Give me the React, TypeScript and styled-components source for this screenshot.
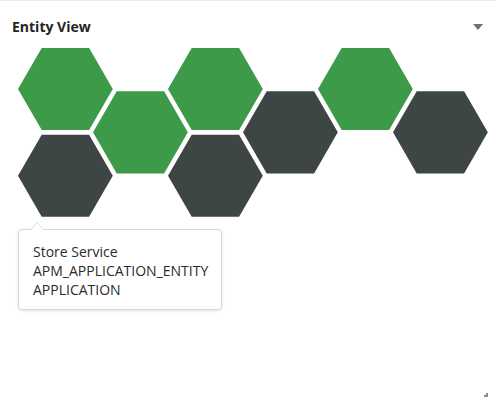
import React from "react";
import styled, { createGlobalStyle } from "styled-components";

const GlobalStyle = createGlobalStyle`
  html, body { margin: 0; padding: 0; background: #ffffff; }
  body { font-family: "Open Sans", "Liberation Sans", sans-serif; color: #222; }
  * { box-sizing: border-box; }
`;

const Panel = styled.div`
  position: relative;
  width: 496px;
  height: 402px;
  background: #ffffff;
  border-top: 1px solid #ececec;
  display: flex;
  flex-direction: column;
`;

const Header = styled.div`
  height: 39px;
  padding: 12px 12px 0 12px;
  display: flex;
  align-items: center;
  justify-content: space-between;
`;

const Title = styled.h2`
  margin: 0;
  font-size: 14px;
  font-weight: 700;
  color: #1f2424;
  line-height: 20px;
`;

const Caret = styled.span`
  width: 0;
  height: 0;
  border-left: 5px solid transparent;
  border-right: 5px solid transparent;
  border-top: 6px solid #707070;
  margin-right: 1px;
`;

const Chart = styled.svg`
  display: block;
  width: 496px;
  height: 190px;
`;

const Tooltip = styled.div`
  position: absolute;
  left: 18px;
  top: 228px;
  width: 204px;
  height: 81px;
  padding: 12px 14px 10px 14px;
  background: #ffffff;
  border: 1px solid #d8d8d8;
  border-radius: 4px;
  box-shadow: 0 1px 3px rgba(0, 0, 0, 0.12);
  font-size: 14px;
  line-height: 19px;
  color: #2b2b2b;

  &::before,
  &::after {
    content: "";
    position: absolute;
    left: 11px;
    width: 0;
    height: 0;
    border-left: 7px solid transparent;
    border-right: 7px solid transparent;
  }
  &::before {
    top: -8px;
    border-bottom: 8px solid #d8d8d8;
  }
  &::after {
    top: -7px;
    left: 12px;
    border-left-width: 6px;
    border-right-width: 6px;
    border-bottom: 7px solid #ffffff;
  }
`;

const Line = styled.div`
  white-space: nowrap;
`;

const ResizeHandle = styled.span`
  position: absolute;
  right: 8px;
  bottom: 5px;
  width: 4px;
  height: 4px;
  border-right: 2px solid #8a8a8a;
  border-bottom: 2px solid #8a8a8a;
`;

const GREEN = "#3d9a49";
const DARK = "#3e4645";

type Hex = { col: number; row: number; color: string };

const hexes: Hex[] = [
  { col: 0, row: 0, color: GREEN },
  { col: 0, row: 1, color: DARK },
  { col: 1, row: 0, color: GREEN },
  { col: 2, row: 0, color: GREEN },
  { col: 2, row: 1, color: DARK },
  { col: 3, row: 0, color: DARK },
  { col: 4, row: 0, color: GREEN },
  { col: 5, row: 0, color: DARK },
];

const R = 47.4;
const OX = 65.4;
const OY = 49; // relative to chart top (page y 40)
const DX = 75;
const DY = 86.7;

function hexPoints(cx: number, cy: number, r: number) {
  const pts: string[] = [];
  for (let i = 0; i < 6; i++) {
    const a = (Math.PI / 3) * i;
    pts.push(`${(cx + r * Math.cos(a)).toFixed(2)},${(cy + r * Math.sin(a)).toFixed(2)}`);
  }
  return pts.join(" ");
}

export default function App() {
  return (
    <>
      <GlobalStyle />
      <Panel>
        <Header>
          <Title>Entity View</Title>
          <Caret />
        </Header>
        <Chart viewBox="0 0 496 190">
          {hexes.map((h, i) => {
            const cx = OX + DX * h.col;
            const cy = OY + (h.col % 2 ? DY / 2 : 0) + DY * h.row;
            return <polygon key={i} points={hexPoints(cx, cy, R)} fill={h.color} />;
          })}
        </Chart>
        <Tooltip>
          <Line>Store Service</Line>
          <Line>APM_APPLICATION_ENTITY</Line>
          <Line>APPLICATION</Line>
        </Tooltip>
        <ResizeHandle />
      </Panel>
    </>
  );
}
